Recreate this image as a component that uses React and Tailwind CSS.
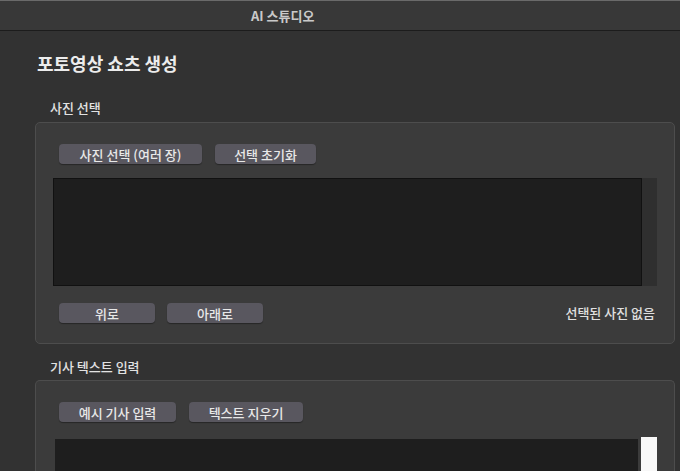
import React from 'react'

const font = { fontFamily: '"Noto Sans CJK KR", "Noto Sans", sans-serif' }

const Btn = ({ children, w }) => (
  <button className={`h-[20px] ${w} rounded-[4px] bg-[#59575f] text-[13px] font-medium leading-none text-[#e8e8e8] shadow-[0_1px_1px_rgba(0,0,0,0.35)]`}>
    {children}
  </button>
)

const App = () => {
  return (
    <div className="w-[680px] h-[471px] overflow-hidden bg-[#323232] flex flex-col" style={font}>
      <div className="h-[31px] shrink-0 bg-[#383838] border-t border-t-[#6a6a6a] border-b border-b-[#1c1c1c] flex items-center pl-[251px]">
        <span className="text-[13px] font-semibold text-[#c9c9c9]">AI 스튜디오</span>
      </div>

      <main className="flex-1 pl-[35px] pr-[5px] flex flex-col">
        <h1 className="mt-[19px] ml-[2px] h-[26px] leading-[26px] text-[18px] font-bold text-[#ececec]">포토영상 쇼츠 생성</h1>

        <div className="mt-[19px] ml-[15px] h-[26px] leading-[26px] text-[13px] font-medium text-[#e2e2e2]">사진 선택</div>
        <section className="mt-[1px] h-[222px] shrink-0 rounded-[5px] bg-[#3b3b3b] border border-[#4d4d4d] pl-[17px] pr-[17px] pt-[21px] flex flex-col">
          <div className="flex gap-[13px] ml-[6px]">
            <Btn w="w-[143px]">사진 선택 (여러 장)</Btn>
            <Btn w="w-[101px]">선택 초기화</Btn>
          </div>
          <div className="mt-[14px] h-[108px] flex">
            <div className="flex-1 bg-[#1e1e1e] border border-[#111]" />
            <div className="w-[15px] bg-[#2f2f2f]" />
          </div>
          <div className="mt-[17px] flex items-center">
            <div className="flex gap-[12px] ml-[6px]">
              <Btn w="w-[96px]">위로</Btn>
              <Btn w="w-[96px]">아래로</Btn>
            </div>
            <span className="ml-auto mr-[2px] text-[13px] font-medium text-[#e0e0e0]">선택된 사진 없음</span>
          </div>
        </section>

        <div className="mt-[10px] ml-[15px] h-[26px] leading-[26px] text-[13px] font-medium text-[#e2e2e2]">기사 텍스트 입력</div>
        <section className="flex-1 rounded-t-[5px] bg-[#3b3b3b] border border-b-0 border-[#4d4d4d] pl-[17px] pr-[17px] pt-[21px] flex flex-col">
          <div className="flex gap-[13px] ml-[6px]">
            <Btn w="w-[117px]">예시 기사 입력</Btn>
            <Btn w="w-[114px]">텍스트 지우기</Btn>
          </div>
          <div className="mt-[15px] flex-1 flex">
            <div className="ml-[2px] mt-[2px] w-[584px] bg-[#1e1e1e]" />
            <div className="ml-[3px] w-[16px] bg-[#f8f8f8]" />
          </div>
        </section>
      </main>
    </div>
  )
}

export default App
